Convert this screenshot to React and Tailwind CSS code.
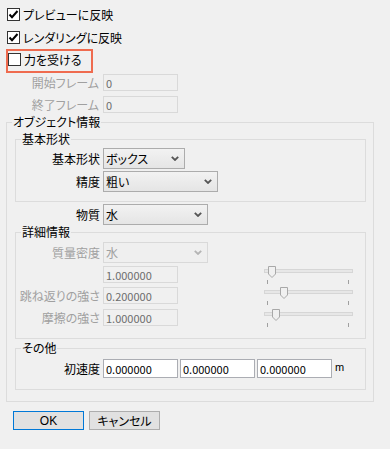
import React from "react";

function Check({ checked }) {
  return (
    <div className="w-[13px] h-[13px] border border-[#333333] bg-white flex items-center justify-center shrink-0">
      {checked && (
        <svg width="11" height="11" viewBox="0 0 11 11">
          <path d="M1.5 5.5 L4 8.2 L9.5 2" fill="none" stroke="#000" strokeWidth="2" />
        </svg>
      )}
    </div>
  );
}

function Chevron({ disabled }) {
  return (
    <svg width="8" height="5" viewBox="0 0 8 5" className="shrink-0">
      <path d="M0.8 0.8 L4 4 L7.2 0.8" fill="none" stroke={disabled ? "#b4b4b4" : "#555555"} strokeWidth="1.8" />
    </svg>
  );
}

function Select({ value, className, disabled }) {
  return (
    <div
      className={
        "h-[21px] border flex items-center justify-between pl-[2px] pr-[5px] " +
        (disabled
          ? "border-[#d9d9d9] bg-[#efefef] text-[#a0a0a0] "
          : "border-[#acacac] bg-linear-to-b from-[#f2f2f2] to-[#e5e5e5] text-black ") +
        className
      }
    >
      <span>{value}</span>
      <Chevron disabled={disabled} />
    </div>
  );
}

function Input({ value, className, disabled }) {
  return (
    <div
      className={
        "border flex items-center pl-[2px] text-[11px] " +
        (disabled
          ? "border-[#d9d9d9] bg-[#f0f0f0] text-[#6d6d6d] "
          : "border-[#abadb3] bg-white text-black ") +
        className
      }
    >
      {value}
    </div>
  );
}

function Group({ title, className, children }) {
  return (
    <div className={"relative border border-[#dcdcdc] " + className}>
      <span className="absolute -top-[8px] left-[5px] px-[1px] bg-[#f0f0f0] leading-[14px] text-black">
        {title}
      </span>
      {children}
    </div>
  );
}

function Slider({ thumb }) {
  return (
    <div className="relative ml-[86px] w-[89px] h-[17px] self-start">
      <div className="absolute left-0 right-0 top-[3px] h-[4px] bg-[#e7e7e7] border border-[#d6d6d6]" />
      <svg width="8" height="12" viewBox="0 0 8 12" className={"absolute top-0 " + thumb}>
        <path d="M0.5 0.5 H7.5 V8 L4 11.5 L0.5 8 Z" fill="#f0f0f0" stroke="#a8a8a8" strokeWidth="1" />
      </svg>
      <div className="absolute left-[3px] top-[14px] w-px h-[4px] bg-[#a0a0a0]" />
      <div className="absolute left-[84px] top-[14px] w-px h-[4px] bg-[#a0a0a0]" />
    </div>
  );
}

export default function App() {
  return (
    <div className="w-[390px] h-[449px] bg-[#f0f0f0] text-[12px] leading-[14px] text-black pt-[8px] overflow-hidden font-['Noto_Sans_CJK_JP',sans-serif] [font-feature-settings:'palt']">
      <div className="flex items-center h-[13px] ml-[7px] gap-[3px]">
        <Check checked />
        <span>プレビューに反映</span>
      </div>
      <div className="flex items-center h-[13px] ml-[7px] gap-[3px] mt-[10px]">
        <Check checked />
        <span>レンダリングに反映</span>
      </div>
      <div className="ml-[6px] mt-[5px] w-[87px] h-[24px] border-2 border-[#ef6b4f] pt-[2px]">
        <div className="flex items-center h-[13px] gap-[3px]">
          <Check />
          <span>力を受ける</span>
        </div>
      </div>

      <div className="flex items-center mt-[1px] h-[17px]">
        <span className="w-[99px] text-right text-[#a0a0a0]">開始フレーム</span>
        <Input value="0" disabled className="ml-[4px] w-[75px] h-[17px]" />
      </div>
      <div className="flex items-center mt-[5px] h-[17px]">
        <span className="w-[99px] text-right text-[#a0a0a0]">終了フレーム</span>
        <Input value="0" disabled className="ml-[4px] w-[75px] h-[17px]" />
      </div>

      <Group title="オブジェクト情報" className="ml-[6px] mt-[9px] w-[368px] pl-[8px] pt-[16px] pb-[11px]">
        <Group title="基本形状" className="w-[351px] pt-[8px] pb-[9px]">
          <div className="flex items-center h-[21px]">
            <span className="w-[84px] text-right mr-[3px]">基本形状</span>
            <Select value="ボックス" className="w-[82px]" />
          </div>
          <div className="flex items-center h-[21px] mt-[2px]">
            <span className="w-[84px] text-right mr-[3px]">精度</span>
            <Select value="粗い" className="w-[115px]" />
          </div>
        </Group>

        <div className="flex items-center h-[21px] mt-[2px]">
          <span className="w-[85px] text-right mr-[3px]">物質</span>
          <Select value="水" className="w-[105px]" />
        </div>

        <Group title="詳細情報" className="w-[351px] mt-[7px] pt-[9px] pb-[12px]">
          <div className="flex items-center h-[21px]">
            <span className="w-[84px] text-right mr-[3px] text-[#a0a0a0]">質量密度</span>
            <Select value="水" disabled className="w-[105px]" />
          </div>
          <div className="flex items-center h-[17px] mt-[3px]">
            <span className="w-[84px] text-right mr-[3px] text-[#a0a0a0]"></span>
            <Input value="1.000000" disabled className="w-[75px] h-[17px]" />
            <Slider thumb="left-[4px]" />
          </div>
          <div className="flex items-center h-[17px] mt-[4px]">
            <span className="w-[84px] text-right mr-[3px] text-[#a0a0a0] whitespace-nowrap">跳ね返りの強さ</span>
            <Input value="0.200000" disabled className="w-[75px] h-[17px]" />
            <Slider thumb="left-[16px]" />
          </div>
          <div className="flex items-center h-[17px] mt-[5px]">
            <span className="w-[84px] text-right mr-[3px] text-[#a0a0a0]">摩擦の強さ</span>
            <Input value="1.000000" disabled className="w-[75px] h-[17px]" />
            <Slider thumb="left-[8px]" />
          </div>
        </Group>

        <Group title="その他" className="w-[351px] mt-[9px] pt-[10px] pb-[11px]">
          <div className="flex items-center h-[19px]">
            <span className="w-[84px] text-right mr-[3px]">初速度</span>
            <Input value="0.000000" className="w-[75px] h-[19px]" />
            <Input value="0.000000" className="w-[75px] h-[19px] ml-[2px]" />
            <Input value="0.000000" className="w-[75px] h-[19px] ml-[2px]" />
            <span className="ml-[3px] -mt-[3px] text-[11px] font-['Liberation_Sans',sans-serif]">m</span>
          </div>
        </Group>
      </Group>

      <div className="flex gap-[5px] ml-[13px] mt-[9px]">
        <div className="w-[71px] h-[19px] border border-[#0078d7] bg-[#e1e1e1] flex items-center justify-center">
          <span className="font-['Liberation_Sans',sans-serif]">OK</span>
        </div>
        <div className="w-[71px] h-[19px] border border-[#adadad] bg-[#e1e1e1] flex items-center justify-center">
          キャンセル
        </div>
      </div>
    </div>
  );
}
